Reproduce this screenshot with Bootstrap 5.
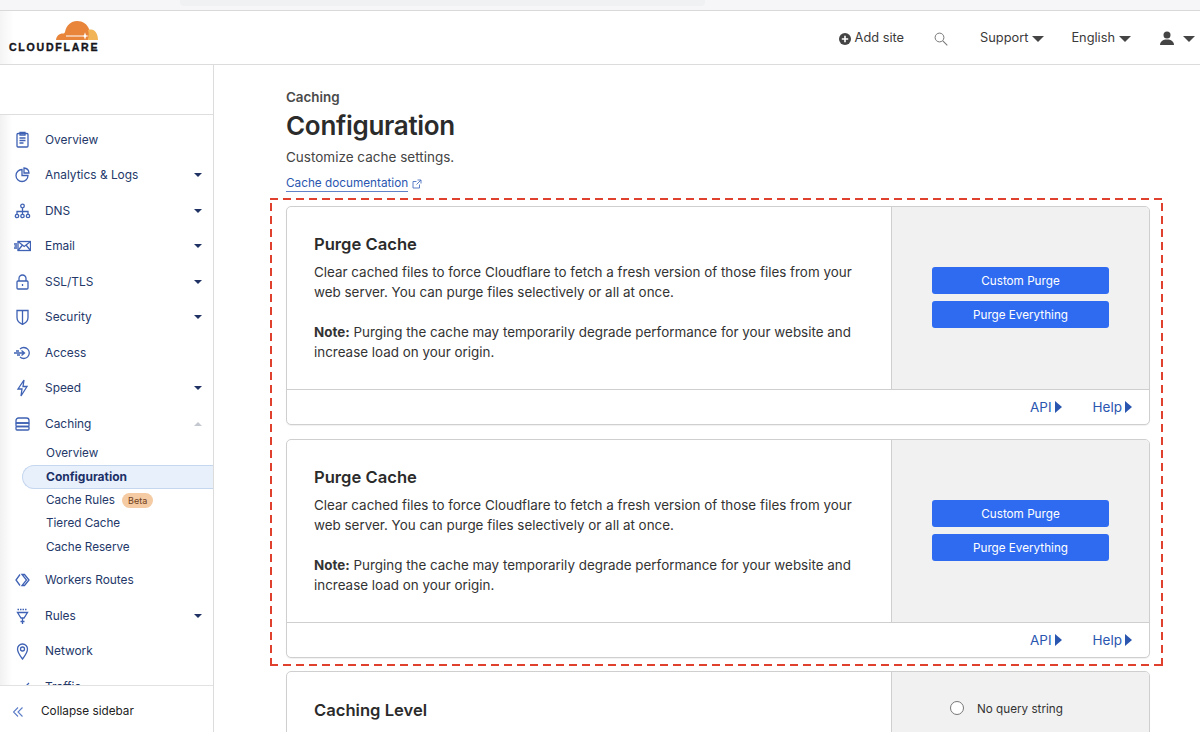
<!doctype html>
<html lang="en"><head><meta charset="utf-8"><title>Cloudflare Caching Configuration</title>
<link rel="stylesheet" href="https://cdn.jsdelivr.net/npm/bootstrap@5.3.0/dist/css/bootstrap.min.css">
<style>
html,body{height:732px;overflow:hidden}
body{font-family:Inter,"Liberation Sans",sans-serif;font-size:14px;color:#333;background:#fff}
.topstrip{height:11px;background:#f6f6f8;border-bottom:1px solid #d9d9d9}
.topstrip div{width:525px;height:6px;margin-left:180px;background:#f0f1f3;border-radius:0 0 4px 4px}
.cf-header{height:54px;border-bottom:1px solid #dcdcdc;padding:0 5px 0 9px;background:linear-gradient(90deg,#f4f4f4,#fff 14px)}
.logo{width:90px;align-self:flex-start;margin-top:10px}
.logo svg{display:block;margin-left:47px}
.logo span{display:block;font-family:"Liberation Sans",sans-serif;font-weight:700;font-size:10.6px;line-height:10px;letter-spacing:1.72px;color:#16161c;-webkit-text-stroke:.35px #16161c;margin-top:2px;white-space:nowrap}
.hitem{font-size:12.8px;color:#3a3a3a;line-height:1;margin-top:2px}
.caret-d{width:0;height:0;border-left:6px solid transparent;border-right:6px solid transparent;border-top:6px solid #444;display:inline-block}
.shell{height:667px}
.side{width:214px;flex:none;border-right:1px solid #dcdcdc;height:667px;background:linear-gradient(90deg,#f1f1f1,#fff 12px)}
.side-blank{height:50px;flex:none;border-bottom:1px solid #dedede;background:#fff}
.side-nav{flex:1 1 auto;min-height:0;overflow:hidden;padding-top:7px}
.nrow{height:35.5px;color:#24386a;font-size:11.9px;padding-left:14px;padding-right:11px}
.nrow .ic{width:17px;height:18px;margin-right:14px;flex:none}
.nrow svg{display:block;fill:none;stroke:#3f62b4;stroke-width:1.3}
.caret-n{width:0;height:0;border-left:4.5px solid transparent;border-right:4.5px solid transparent;border-top:4.5px solid #1f3263;margin-left:auto}
.caret-u{border-top:0;border-bottom:4.5px solid #c4c8d0}
.sub{height:23.6px;color:#24386a;font-size:11.7px;padding-left:46px}
.sub.on{margin-left:22px;padding-left:23px;font-weight:700;font-size:12px;background:#e8f0fb;border:1px solid #c5d6ef;border-right:0;border-radius:12px 0 0 12px;color:#1c3068}
.subend{height:3px}
.beta{background:#f5cba3;color:#70401c;font-size:9px;border-radius:8px;padding:2px 6px;margin-left:7px;line-height:11px}
.side-foot{height:47px;flex:none;border-top:1px solid #e2e2e2;background:#fff;font-size:11.75px;color:#222;padding-left:13px;padding-top:5px}
.side-foot svg{margin-right:18px;fill:none;stroke:#5b7cc7;stroke-width:1.1}
.main{padding:0 50px 0 72px;min-width:0;overflow:hidden;height:667px}
.crumb{font-size:13.4px;font-weight:600;color:#4a4a4a;line-height:16px;padding-top:24px}
.main h1{font-size:26px;font-weight:600;color:#2b2b2b;line-height:34px;letter-spacing:-.3px;margin:4px 0 5px}
.lead-t{font-size:13.5px;color:#444;line-height:18px;margin-bottom:9px}
.doc{font-size:11.75px;line-height:16px;color:#2a56b0;text-decoration:none;border-bottom:1px solid #5f82c9;display:inline-block}
.dash{margin:6px -13px 0 -16px;padding:8px 13px 8px 16px;background:
 repeating-linear-gradient(90deg,#e0402e 0 8px,transparent 8px 13px) top/100% 2px no-repeat,
 repeating-linear-gradient(90deg,#e0402e 0 8px,transparent 8px 13px) bottom/100% 2px no-repeat,
 repeating-linear-gradient(0deg,#e0402e 0 8px,transparent 8px 13px) left/2px 100% no-repeat,
 repeating-linear-gradient(0deg,#e0402e 0 8px,transparent 8px 13px) right/2px 100% no-repeat}
.cf-card{border:1px solid #cfcfcf;border-radius:5px;overflow:hidden;background:#fff;box-shadow:0 1px 1px rgba(0,0,0,.06)}
.cf-card+.cf-card{margin-top:14px}
.cf-body{height:183px;border-bottom:1px solid #cfcfcf}
.cf-l{flex:1 1 auto;padding:27px 27px 0;border-right:1px solid #cfcfcf;min-width:0}
.cf-l h2{font-size:16.6px;font-weight:600;color:#2b2b2b;line-height:20px;margin:0 0 8px}
.cf-l p{font-size:13.42px;line-height:20.2px;color:#333;margin:0}
.cf-l p+p{margin-top:19.8px}
.cf-r{width:257px;flex:none;background:#f1f1f1;padding-top:60px}
.cf-r .btn{width:177px;height:27px;padding:1px 0 0;background:#2f6bf0;border:0;border-radius:3px;color:#fff;font-size:11.7px;line-height:26px;display:block;margin:0 auto 7px}
.cf-foot{height:34px;padding-right:17px;gap:31px;font-size:13.5px;color:#2a56b0}
.cf-foot span{display:flex;align-items:center;gap:3px}
.cf-foot i{width:0;height:0;border-top:6px solid transparent;border-bottom:6px solid transparent;border-left:7px solid #2a56b0;display:block}
.third{margin-top:5px}
.third .cf-l{height:300px;padding-top:28px}
.third .cf-r{padding:28px 0 0 58px;height:300px}
.radio-r{font-size:11.7px;color:#333;gap:13px;height:20px}
.radio-r b{width:14px;height:14px;border:1px solid #777;border-radius:50%;background:#fff;display:block;margin-top:-4px}
</style></head>
<body>
<div class="topstrip"><div></div></div>
<header class="cf-header d-flex align-items-center">
 <div class="logo">
  <svg width="42" height="19" viewBox="0 0 42 19"><path fill="#e8853a" d="M0 19C.5 15 3 12.500 7 12.500c1 0 1.500-.5 2-1.500C10.500 4 15 0 21 0c6 0 10 3 12 8l1 6-2 5z"/><path fill="#f1b457" d="M32 19c1-3 1-7 0-10 1-.3 2-.4 3-.4 4 0 7 4.400 7 10.400z"/><path fill="#fff" d="M10 14.500h17l1-.3 1-3 1 3 3 .8-3 .8-1 3-1-3-1-.4H10z"/></svg>
  <span>CLOUDFLARE</span>
 </div>
 <div class="ms-auto d-flex align-items-center hitem">
  <svg width="12" height="12" viewBox="0 0 12 12"><circle cx="6" cy="6" r="6" fill="#444"/><path d="M6 2.800v6.400M2.800 6h6.400" stroke="#fff" stroke-width="1.600"/></svg>
  <span class="ms-1">Add site</span>
  <svg class="search" width="14" height="14" viewBox="0 0 14 14" style="margin-left:30px"><circle cx="5.500" cy="5.500" r="4.400" fill="none" stroke="#777" stroke-width="1"/><path d="M8.800 8.800l4.500 4.500" stroke="#777" stroke-width="1.100"/></svg>
  <span style="margin-left:32px">Support</span><i class="caret-d ms-1"></i>
  <span style="margin-left:27px">English</span><i class="caret-d ms-1"></i>
  <svg width="14" height="15" viewBox="0 0 14 15" style="margin-left:29px"><circle cx="7" cy="4" r="3.500" fill="#444"/><path fill="#444" d="M0 14c0-3.500 3-5.500 7-5.500s7 2 7 5.500z"/></svg>
  <i class="caret-d" style="margin-left:9px"></i>
 </div>
</header>
<div class="shell d-flex">
 <aside class="side d-flex flex-column">
  <div class="side-blank"></div>
  <nav class="side-nav">
   <div class="nrow d-flex align-items-center"><span class="ic"><svg width="17" height="18" viewBox="0 0 17 18"><rect x="3" y="2.500" width="11" height="13.500" rx="1"/><path d="M6 1.500h5v2.500H6zM5.500 7h6M5.500 9.500h6M5.500 12h4"/></svg></span>Overview</div>
   <div class="nrow d-flex align-items-center"><span class="ic"><svg width="17" height="18" viewBox="0 0 17 18"><path d="M8 3.500a6 6 0 1 0 6 6H8z"/><path d="M10 2a5.500 5.500 0 0 1 5 5h-5z"/></svg></span>Analytics &amp; Logs<i class="caret-n"></i></div>
   <div class="nrow d-flex align-items-center"><span class="ic"><svg width="17" height="18" viewBox="0 0 17 18"><circle cx="8.500" cy="4" r="1.800"/><circle cx="3" cy="14" r="1.700"/><circle cx="8.500" cy="14" r="1.700"/><circle cx="14" cy="14" r="1.700"/><path d="M8.500 6v6M3 12v-2.500h11V12"/></svg></span>DNS<i class="caret-n"></i></div>
   <div class="nrow d-flex align-items-center"><span class="ic"><svg width="17" height="18" viewBox="0 0 17 18"><rect x="4" y="4.500" width="12.500" height="9"/><path d="M4 4.500l6.200 5 6.300-5M4 13.500l4.500-5.500M16.500 13.500L12 8M0 7h3M.5 9h2.500M0 11h3"/></svg></span>Email<i class="caret-n"></i></div>
   <div class="nrow d-flex align-items-center"><span class="ic"><svg width="17" height="18" viewBox="0 0 17 18"><rect x="3" y="8" width="11" height="8" rx="1"/><path d="M5 8V5.500a3.500 3.500 0 0 1 7 0V8M8.500 11v2"/></svg></span>SSL/TLS<i class="caret-n"></i></div>
   <div class="nrow d-flex align-items-center"><span class="ic"><svg width="17" height="18" viewBox="0 0 17 18"><path d="M3 2.500h11v7c0 3.500-3 5.800-5.500 6.800C6 15.300 3 13 3 9.500z"/><path d="M8.500 2.500v13.800"/></svg></span>Security<i class="caret-n"></i></div>
   <div class="nrow d-flex align-items-center"><span class="ic"><svg width="17" height="18" viewBox="0 0 17 18"><path d="M6 5a5.500 5.500 0 1 1 0 8"/><path d="M0 9h10M7.500 6.500L10.500 9l-3 2.500M2 7h3M3 11h3"/></svg></span>Access</div>
   <div class="nrow d-flex align-items-center"><span class="ic"><svg width="17" height="18" viewBox="0 0 17 18"><path d="M10 1L4 10h4l-1 7 6-9.500H9z"/></svg></span>Speed<i class="caret-n"></i></div>
   <div class="nrow d-flex align-items-center"><span class="ic"><svg width="17" height="18" viewBox="0 0 17 18"><path d="M2 8V5.500a2.500 2.500 0 0 1 2.500-2.500h8A2.500 2.500 0 0 1 15 5.500V8z"/><rect x="2" y="8" width="13" height="3.500" rx="1"/><rect x="2" y="11.500" width="13" height="3.500" rx="1"/></svg></span>Caching<i class="caret-n caret-u"></i></div>
   <div class="sub d-flex align-items-center">Overview</div>
   <div class="sub on d-flex align-items-center">Configuration</div>
   <div class="sub d-flex align-items-center">Cache Rules<span class="beta">Beta</span></div>
   <div class="sub d-flex align-items-center">Tiered Cache</div>
   <div class="sub d-flex align-items-center">Cache Reserve</div>
   <div class="subend"></div>
   <div class="nrow d-flex align-items-center"><span class="ic"><svg width="17" height="18" viewBox="0 0 17 18"><path d="M6 3.500L2 9l4 5.500M8 3.500h2.500L15 9l-4.500 5.500H8L12.500 9z"/></svg></span>Workers Routes</div>
   <div class="nrow d-flex align-items-center"><span class="ic"><svg width="17" height="18" viewBox="0 0 17 18"><path d="M3.500 5.500h10l-3.500 5.500H7zM8.500 11v6M6.500 14.500h4" /><path d="M3.500 2.500h10" stroke-dasharray="1.500 1"/></svg></span>Rules<i class="caret-n"></i></div>
   <div class="nrow d-flex align-items-center"><span class="ic"><svg width="17" height="18" viewBox="0 0 17 18"><path d="M8.500 17C5 12.500 3.500 10 3.500 7a5 5 0 0 1 10 0c0 3-1.500 5.500-5 10z"/><circle cx="8.500" cy="7" r="2"/></svg></span>Network</div>
   <div class="nrow d-flex align-items-center"><span class="ic"><svg width="17" height="18" viewBox="0 0 17 18"><path d="M2 12l5-4 3 2 5-5"/></svg></span>Traffic<i class="caret-n"></i></div>
  </nav>
  <div class="side-foot d-flex align-items-center"><svg width="10" height="10" viewBox="0 0 10 10"><path d="M5 .5L.5 5 5 9.500M9.500 .5L5 5l4.500 4.500"/></svg>Collapse sidebar</div>
 </aside>
 <main class="main flex-grow-1">
  <div class="crumb">Caching</div>
  <h1>Configuration</h1>
  <div class="lead-t">Customize cache settings.</div>
  <div class="d-flex align-items-center gap-1"><a class="doc" href="#">Cache documentation</a><svg width="10" height="10" viewBox="0 0 10 10" fill="none" stroke="#4a70c0" stroke-width=".9"><path d="M7.500 5.500v3.500h-6.500V2.500h3.500M5.500 1h3.500v3.500M9 1L4.500 5.500"/></svg></div>
  <div class="dash">
   <section class="cf-card">
    <div class="cf-body d-flex">
     <div class="cf-l"><h2>Purge Cache</h2><p>Clear cached files to force Cloudflare to fetch a fresh version of those files from your web server. You can purge files selectively or all at once.</p><p><strong>Note:</strong> Purging the cache may temporarily degrade performance for your website and increase load on your origin.</p></div>
     <div class="cf-r"><button class="btn">Custom Purge</button><button class="btn">Purge Everything</button></div>
    </div>
    <div class="cf-foot d-flex align-items-center justify-content-end"><span>API<i></i></span><span>Help<i></i></span></div>
   </section>
   <section class="cf-card">
    <div class="cf-body d-flex">
     <div class="cf-l"><h2>Purge Cache</h2><p>Clear cached files to force Cloudflare to fetch a fresh version of those files from your web server. You can purge files selectively or all at once.</p><p><strong>Note:</strong> Purging the cache may temporarily degrade performance for your website and increase load on your origin.</p></div>
     <div class="cf-r"><button class="btn">Custom Purge</button><button class="btn">Purge Everything</button></div>
    </div>
    <div class="cf-foot d-flex align-items-center justify-content-end"><span>API<i></i></span><span>Help<i></i></span></div>
   </section>
  </div>
  <section class="cf-card third">
   <div class="d-flex">
    <div class="cf-l"><h2>Caching Level</h2><p>Determine how much of your website's static content you want Cloudflare to cache. Increased caching can speed up page load time.</p></div>
    <div class="cf-r"><div class="radio-r d-flex align-items-center"><b></b>No query string</div><div class="radio-r d-flex align-items-center mt-3"><b></b>Query string</div></div>
   </div>
  </section>
 </main>
</div>
</body></html>
